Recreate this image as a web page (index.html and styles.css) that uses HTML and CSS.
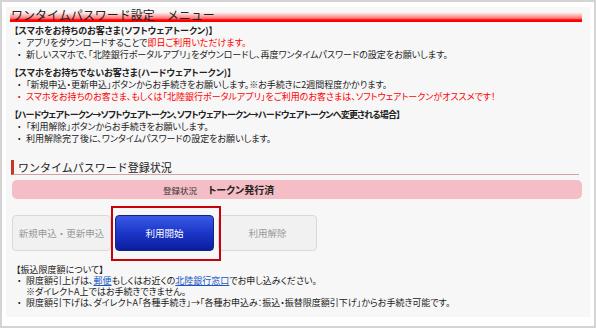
FILE: index.html
```html
<!DOCTYPE html>
<html lang="ja">
<head>
    <meta charset="UTF-8">
    <meta name="viewport" content="width=device-width, initial-scale=1.0">
    <title>ワンタイムパスワード設定</title>
    <link rel="stylesheet" href="styles.css">
</head>
<body>
    <div class="frame">
        <div class="panel">
            <h1 class="page-title">ワンタイムパスワード設定　メニュー</h1>

            <div class="notice">
                <p class="notice-head">【スマホをお持ちのお客さま(ソフトウェアトークン)】</p>
                <ul class="dot-list">
                    <li>アプリをダウンロードすることで<span class="red">即日ご利用いただけます。</span></li>
                    <li>新しいスマホで、「北陸銀行ポータルアプリ」をダウンロードし、再度ワンタイムパスワードの設定をお願いします。</li>
                </ul>
            </div>

            <div class="notice">
                <p class="notice-head">【スマホをお持ちでないお客さま(ハードウェアトークン)】</p>
                <ul class="dot-list">
                    <li>「新規申込・更新申込」ボタンからお手続きをお願いします。※お手続きに2週間程度かかります。</li>
                    <li class="red">スマホをお持ちのお客さま、もしくは「北陸銀行ポータルアプリ」をご利用のお客さまは、ソフトウェアトークンがオススメです！</li>
                </ul>
            </div>

            <div class="notice">
                <p class="notice-head tight">【ハードウェアトークン→ソフトウェアトークン、ソフトウェアトークン→ハードウェアトークンへ変更される場合】</p>
                <ul class="dot-list">
                    <li>「利用解除」ボタンからお手続きをお願いします。</li>
                    <li>利用解除完了後に、ワンタイムパスワードの設定をお願いします。</li>
                </ul>
            </div>

            <h2 class="sub-title">ワンタイムパスワード登録状況</h2>

            <div class="status-bar">
                <span class="status-label">登録状況</span>
                <span class="status-value">トークン発行済</span>
            </div>

            <div class="btn-row">
                <button class="btn btn-off">新規申込・更新申込</button>
                <div class="btn-mark">
                    <button class="btn btn-on">利用開始</button>
                </div>
                <button class="btn btn-off">利用解除</button>
            </div>

            <div class="limit">
                <p class="limit-head">【振込限度額について】</p>
                <ul class="dot-list limit-list">
                    <li>限度額引上げは、<a href="#">郵便</a>もしくはお近くの<a href="#">北陸銀行窓口</a>でお申し込みください。<br>※ダイレクトA上ではお手続きできません。</li>
                    <li>限度額引下げは、ダイレクトA「各種手続き」→「各種お申込み：振込・振替限度額引下げ」からお手続き可能です。</li>
                </ul>
            </div>
        </div>
    </div>
</body>
</html>
```

FILE: styles.css
```css
* {
    box-sizing: border-box;
}

body {
    margin: 0;
    font-family: "Noto Sans CJK JP", "Noto Sans", sans-serif;
    color: #222;
    background-color: #fff;
}

.frame {
    width: 596px;
    height: 328px;
    border: 2px solid #d4d4d4;
    padding: 4px 4px 10px 4px;
    background-color: #fff;
}

.panel {
    height: 100%;
    background-color: #f7f7f7;
    padding: 0 8px 0 4px;
}

.page-title {
    margin: 1px 0 0;
    height: 15px;
    padding-left: 1px;
    font-size: 12px;
    font-weight: normal;
    line-height: 15px;
    color: #222;
    background: linear-gradient(to bottom, rgba(255, 0, 0, 0) 0%, rgba(255, 0, 0, 0) 35%, #fde0e0 42%, #f77 75%, #f00 86%, #f00 100%);
}

.notice {
    padding-left: 4px;
    margin-top: 6px;
    font-size: 9px;
    line-height: 12px;
    font-feature-settings: "palt";
}

.notice:first-of-type {
    margin-top: 3px;
}

.notice-head {
    margin: 0;
    font-weight: bold;
}

.notice-head.tight {
    letter-spacing: -0.8px;
}

.dot-list {
    list-style: none;
    margin: 0;
    padding: 0 0 0 4px;
}

.dot-list li {
    position: relative;
    padding-left: 8px;
}

.dot-list li::before {
    content: "・";
    position: absolute;
    left: -1px;
    color: #222;
}

.red {
    color: #f00;
}

.dot-list li.red::before {
    color: #f00;
}

.sub-title {
    margin: 15px 3px 0 1px;
    height: 15px;
    padding-left: 4px;
    border-left: 3px solid #c0392b;
    border-bottom: 1px solid #cfa3a3;
    font-size: 11px;
    font-weight: normal;
    line-height: 14px;
    color: #222;
}

.status-bar {
    margin: 5px 0 0 2px;
    height: 19px;
    border-radius: 5px;
    background-color: #f5bec6;
    padding-left: 151px;
    display: flex;
    align-items: center;
    gap: 11px;
}

.status-label {
    font-size: 8.5px;
    color: #333;
}

.status-value {
    font-size: 10px;
    font-weight: bold;
    color: #222;
    font-feature-settings: "palt";
}

.btn-row {
    margin: 16px 0 0 2px;
    display: flex;
    gap: 4px;
}

.btn {
    width: 99px;
    height: 36px;
    border-radius: 4px;
    font-family: "Noto Sans CJK JP", sans-serif;
    font-size: 9.5px;
    padding: 0;
}

.btn-off {
    background-color: #f1f1f1;
    border: 1px solid #d9d9d9;
    color: #999;
}

.btn-on {
    display: block;
    background: linear-gradient(to bottom, #3a5ae6 0%, #1c36c8 50%, #0b1d9e 100%);
    border: 1px solid #14237e;
    color: #fff;
}

.btn-mark {
    position: relative;
}

.btn-mark::after {
    content: "";
    position: absolute;
    top: -9px;
    bottom: -10px;
    left: -4px;
    right: -7px;
    border: 2px solid #c8000a;
}

.limit {
    margin-top: 13px;
    padding-left: 6px;
    font-size: 9px;
    line-height: 11px;
    font-feature-settings: "palt";
}

.limit-head {
    margin: 0;
}

.limit-list {
    padding-left: 2px;
}

.limit-list a {
    color: #1a56c4;
    text-decoration: underline;
}
```
